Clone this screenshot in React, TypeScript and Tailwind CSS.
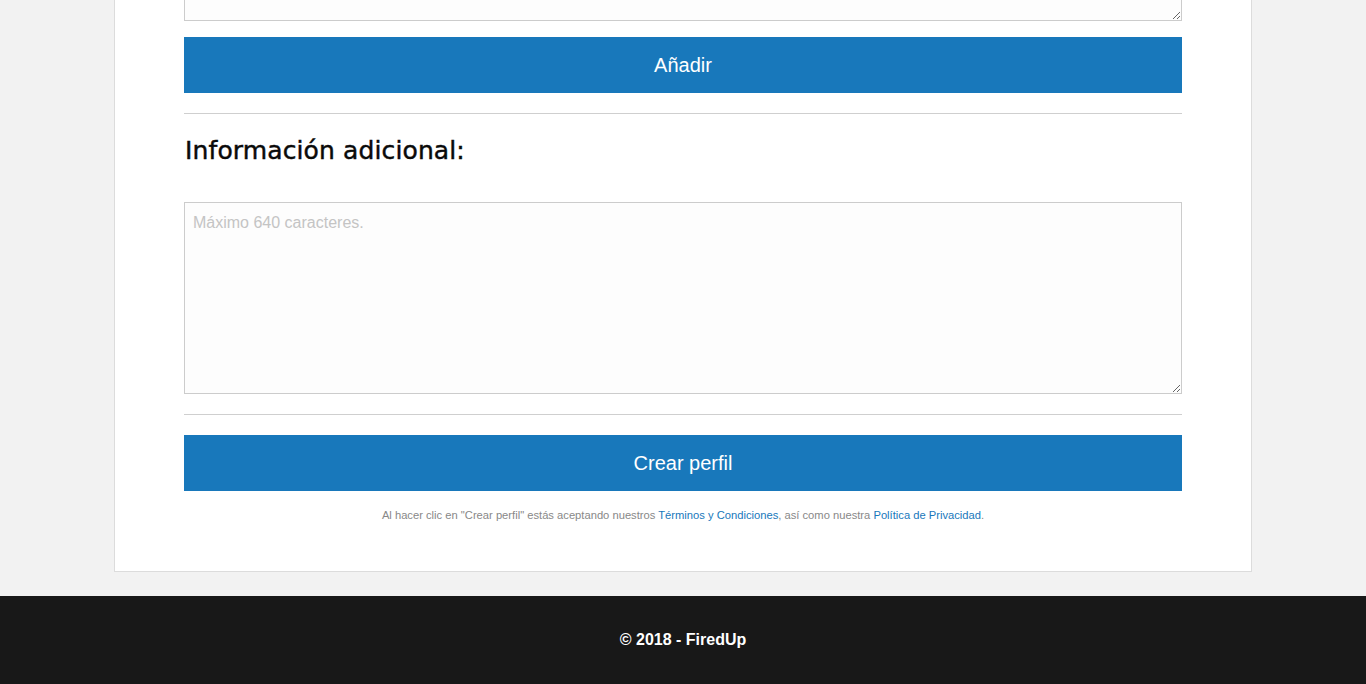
export default function App() {
  return (
    <div className="min-h-screen bg-[#f2f2f2] font-['Liberation_Sans',Arial,sans-serif]">
      <div className="mx-auto -mt-[101px] w-[1138px] border border-[#dcdcdc] bg-white px-[69px] pb-[49px]">
        <textarea
          className="block h-[121px] w-full resize-y border border-[#ccc] bg-[#fdfdfd] px-2 py-2 text-base"
          defaultValue=""
        />
        <button
          type="button"
          className="mt-4 block h-[56px] w-full bg-[#1878bb] text-[20px] text-white"
        >
          Añadir
        </button>
        <hr className="mt-5 border-t border-[#cfcfcf]" />
        <h2 className="mt-[22px] pl-px font-['DejaVu_Sans',sans-serif] text-[25px] leading-[30px] tracking-[0.12px] text-[#0a0a0a] [-webkit-text-stroke:0.45px_#0a0a0a]">
          Información adicional:
        </h2>
        <textarea
          className="mt-[36px] block h-[192px] w-full resize-y border border-[#ccc] bg-[#fdfdfd] px-2 py-2 text-base placeholder:text-[#c4c4c4]"
          placeholder="Máximo 640 caracteres."
        />
        <hr className="mt-5 border-t border-[#cfcfcf]" />
        <button
          type="button"
          className="mt-5 block h-[56px] w-full bg-[#1878bb] text-[20px] text-white"
        >
          Crear perfil
        </button>
        <p className="mt-[17px] text-center text-[11.2px] leading-[14px] text-[#888]">
          Al hacer clic en "Crear perfil" estás aceptando nuestros{" "}
          <a href="#" className="text-[#1878bb]">
            Términos y Condiciones
          </a>
          , así como nuestra{" "}
          <a href="#" className="text-[#1878bb]">
            Política de Privacidad
          </a>
          .
        </p>
      </div>
      <footer className="mt-6 flex h-[88px] items-center justify-center bg-[#181818]">
        <p className="text-base font-bold text-white">© 2018 - FiredUp</p>
      </footer>
    </div>
  );
}
